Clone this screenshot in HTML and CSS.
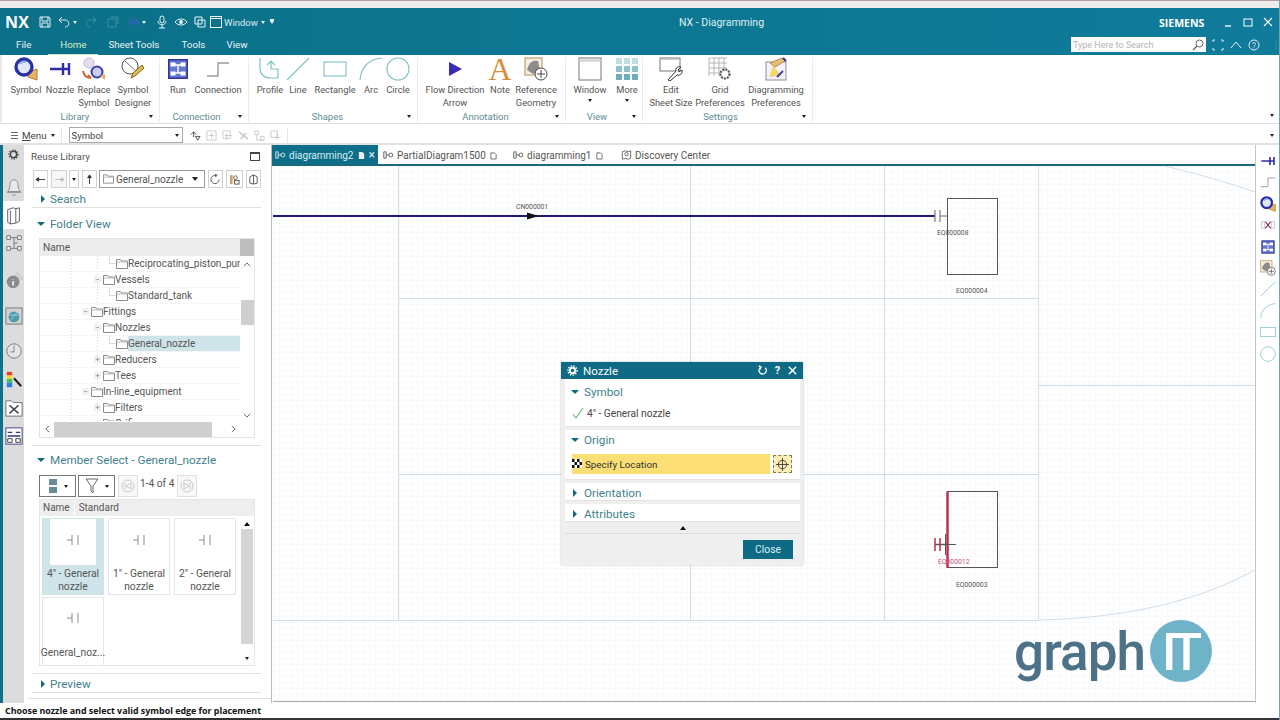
FILE: index.html
```html
<!DOCTYPE html>
<html lang="en">
<head>
<meta charset="utf-8">
<title>NX - Diagramming</title>
<link rel="stylesheet" href="styles.css">
</head>
<body>
<svg class="defs" width="0" height="0" aria-hidden="true">
  <defs>
    <symbol id="i-nozzle" viewBox="0 0 24 24"><path d="M2 12H15M15 6V18M21 6V18M15 12H21" fill="none" stroke="#2f2aa8" stroke-width="2.4"/></symbol>
    <symbol id="i-symbol" viewBox="0 0 24 24"><path d="M14 15l9-3v11l-9-3z" fill="#e9b25f" stroke="#b8802c"/><circle cx="10" cy="10" r="8" fill="#dfe9f8" stroke="#2b2fa6" stroke-width="3.4"/><path d="M6 7a5 5 0 0 1 6-2" fill="none" stroke="#7fb2e8" stroke-width="2"/></symbol>
    <symbol id="i-replace" viewBox="0 0 24 24"><circle cx="7" cy="6" r="5" fill="#e5dcef" stroke="#c5b7d6"/><circle cx="15" cy="15" r="5.5" fill="#c9d1ef" stroke="#3a3fa8" stroke-width="2"/><path d="M1 14c1 5 4 7 8 7M9 21l-3-3" fill="none" stroke="#d4682c" stroke-width="2"/><path d="M18 19l5-2v6z" fill="#e9b25f"/></symbol>
    <symbol id="i-designer" viewBox="0 0 24 24"><circle cx="9" cy="9" r="8" fill="#fff" stroke="#555"/><path d="M4 4l13 12" stroke="#777"/><path d="M10 21l2-5L21 8l2 3-9 8z" fill="#e3bd4d" stroke="#7a6420"/></symbol>
    <symbol id="i-run" viewBox="0 0 24 24"><rect x="2" y="2" width="20" height="20" fill="#2e34a0"/><rect x="3.500" y="3.500" width="17" height="17" fill="#6577c8"/><path d="M8 8H16M12 8V16M8 16H16" stroke="#fff" stroke-width="1.4"/><rect x="4.500" y="5.500" width="5" height="4" fill="#fff"/><rect x="14.500" y="5.500" width="5" height="4" fill="#fff"/><rect x="4.500" y="14.500" width="5" height="4" fill="#fff"/><rect x="14.500" y="14.500" width="5" height="4" fill="#fff"/></symbol>
    <symbol id="i-conn" viewBox="0 0 24 24"><path d="M1 19H12V6H23" fill="none" stroke="#9a9a9a" stroke-width="1.400"/></symbol>
    <symbol id="i-profile" viewBox="0 0 24 24"><path d="M2 1V11C2 17 6 21 12 21H20V12H13V5M9 8l4-4 4 4" fill="none" stroke="#7cc2c0" stroke-width="1.200"/></symbol>
    <symbol id="i-line" viewBox="0 0 24 24"><path d="M1 23L23 1" stroke="#7cc2c0" stroke-width="1.100"/></symbol>
    <symbol id="i-rect" viewBox="0 0 24 24"><rect x="1" y="5" width="22" height="14" fill="none" stroke="#7cc2c0" stroke-width="1.100"/></symbol>
    <symbol id="i-arc" viewBox="0 0 24 24"><path d="M1 23C2 10 10 2 23 1" fill="none" stroke="#7cc2c0" stroke-width="1.100"/></symbol>
    <symbol id="i-circle" viewBox="0 0 24 24"><circle cx="12" cy="12" r="11" fill="none" stroke="#7cc2c0" stroke-width="1.100"/></symbol>
    <symbol id="i-flow" viewBox="0 0 24 24"><path d="M6 5L19 12L6 19z" fill="#3a2bb8"/></symbol>
    <symbol id="i-ref" viewBox="0 0 24 24"><rect x="1" y="1" width="17" height="17" fill="#f5efe2" stroke="#c9a678" stroke-width="1.300"/><path d="M3 13C5 5 9 3 14 4L16 14 9 17z" fill="#8c8c8c"/><circle cx="17" cy="17" r="6" fill="#fff" stroke="#444"/><path d="M17 13V21M13 17H21" stroke="#444"/></symbol>
    <symbol id="i-window" viewBox="0 0 24 24"><rect x="1" y="1" width="22" height="22" fill="#fff" stroke="#777"/><path d="M1 3.500H23" stroke="#ccc" stroke-width="2"/></symbol>
    <symbol id="i-more" viewBox="0 0 24 24"><path d="M1 1h6v6H1zM9 1h6v6H9zM17 1h6v6h-6z" fill="#bfdde2"/><path d="M1 9h6v6H1zM9 9h6v6H9zM17 9h6v6h-6z" fill="#8fc2cb"/><path d="M1 17h6v6H1zM9 17h6v6H9zM17 17h6v6h-6z" fill="#70adb8"/></symbol>
    <symbol id="i-edit" viewBox="0 0 24 24"><rect x="1" y="1" width="20" height="13" fill="#fff" stroke="#777"/><path d="M1 2.500H21" stroke="#ccc"/><path d="M9 23l8-9c-1-3 2-5 5-4l-3 3 1 2 3-2c1 3-2 6-5 5l-7 6z" fill="#fff" stroke="#333"/></symbol>
    <symbol id="i-grid" viewBox="0 0 24 24"><path d="M1 1V19M6 1V19M11 1V19M16 1V19M1 1H19M1 6H19M1 11H19M1 16H19" stroke="#a5a5a5" stroke-width=".8" fill="none"/><circle cx="17" cy="17" r="4.500" fill="#fff" stroke="#555" stroke-width="2.200" stroke-dasharray="2 1"/></symbol>
    <symbol id="i-diag" viewBox="0 0 24 24"><rect x="2" y="5" width="20" height="18" fill="#f4f1fb" stroke="#8d8ea0"/><path d="M5 20L9 9l8 9z" fill="#f3d76a"/><path d="M6 6L18 1l3 3-10 6z" fill="#e4bf73" stroke="#b98e44"/><path d="M19 1l3 3" stroke="#2f2aa8" stroke-width="2"/><path d="M13 20l6-6" stroke="#3a3fa8" stroke-width="2"/></symbol>
    <symbol id="i-folder" viewBox="0 0 12 10"><path d="M.5 9.500V.5h4l1 1.500h6v7.500z" fill="#fff" stroke="#8a8a8a"/><path d="M.5 3h11" stroke="#bbb"/></symbol>
    <symbol id="i-card" viewBox="0 0 14 12"><path d="M1 6H6M6 1V11M12 1V11" fill="none" stroke="#8b8b8b"/></symbol>
  </defs>
</svg>

<div class="app">
  <div class="top-strip"></div>

  <header class="titlebar">
    <div class="title-row">
      <span class="logo-nx">NX</span>
      <div class="quick">
        <svg class="q q-save" viewBox="0 0 12 12"><path d="M1 1H10L11 2V11H1zM3 1V5H9V1M3 11V7H9V11" fill="none" stroke="#e8f3f6"/></svg>
        <svg class="q q-undo" viewBox="0 0 12 12"><path d="M1 4H7C12 4 12 11 7 11M1 4L4 1M1 4L4 7" fill="none" stroke="#dcebf0"/></svg>
        <span class="caret caret-light"></span>
        <svg class="q q-dim" viewBox="0 0 12 12"><path d="M11 4H5C0 4 0 11 5 11M11 4L8 1M11 4L8 7" fill="none" stroke="#3b90a6"/></svg>
        <svg class="q q-dim2" viewBox="0 0 12 12"><path d="M1 3H9V11H1zM4 1H11V8" fill="none" stroke="#3b90a6"/></svg>
        <svg class="q q-dim3" viewBox="0 0 12 12"><path d="M1 6H7M7 2V10M10 3V9" fill="none" stroke="#3060b8" stroke-width="2"/></svg>
        <span class="caret caret-light"></span>
        <svg class="q q-mic" viewBox="0 0 12 14"><rect x="4" y="1" width="4" height="7" rx="2" fill="none" stroke="#e8f3f6"/><path d="M2 6C2 11 10 11 10 6M6 10V13M3 13H9" fill="none" stroke="#e8f3f6"/></svg>
        <svg class="q q-eye" viewBox="0 0 14 12"><path d="M1 6C4 2 10 2 13 6C10 10 4 10 1 6z" fill="none" stroke="#e8f3f6"/><circle cx="7" cy="6" r="2" fill="#e8f3f6"/></svg>
        <svg class="q q-copy" viewBox="0 0 12 12"><path d="M1 1H8V8H1zM4 4H11V11H4z" fill="#0c7690" stroke="#e8f3f6"/></svg>
        <svg class="q q-win" viewBox="0 0 12 12"><rect x=".5" y=".5" width="11" height="11" fill="none" stroke="#e8f3f6"/><path d="M1 2.500H11" stroke="#e8f3f6"/></svg>
        <span class="q-label">Window</span>
        <span class="caret caret-light"></span>
        <span class="caret caret-light caret-bar"></span>
      </div>
      <span class="app-title">NX - Diagramming</span>
      <span class="siemens">SIEMENS</span>
      <div class="win-btns">
        <svg class="wb" viewBox="0 0 10 10"><path d="M2 9H8" stroke="#fff" stroke-width="1.300"/></svg>
        <svg class="wb" viewBox="0 0 10 10"><rect x="1" y="2" width="8" height="7" fill="none" stroke="#fff"/></svg>
        <svg class="wb" viewBox="0 0 10 10"><path d="M1 1L9 9M9 1L1 9" stroke="#fff" stroke-width="1.200"/></svg>
      </div>
    </div>
    <div class="menu-row">
      <nav class="menu-tabs">
        <span class="mt mt-file">File</span>
        <span class="mt mt-home">Home</span>
        <span class="mt mt-sheet">Sheet Tools</span>
        <span class="mt mt-tools">Tools</span>
        <span class="mt mt-view">View</span>
      </nav>
      <div class="search">
        <span class="search-text">Type Here to Search</span>
        <svg class="search-ico" viewBox="0 0 12 12"><circle cx="7.500" cy="4.500" r="3.500" fill="none" stroke="#666"/><path d="M5 7L1 11" stroke="#666" stroke-width="1.300"/></svg>
      </div>
      <div class="help-btns">
        <svg class="hb" viewBox="0 0 12 12"><path d="M1 3V1H3M9 1H11V3M1 9V11H3M9 11H11V9" fill="none" stroke="#e3f0f3"/></svg>
        <svg class="hb" viewBox="0 0 12 12"><path d="M1 9L6 3L11 9" fill="none" stroke="#e3f0f3"/></svg>
        <svg class="hb" viewBox="0 0 12 12"><circle cx="6" cy="6" r="5" fill="none" stroke="#e3f0f3"/><path d="M4.500 5C4.500 3 7.500 3 7.500 5C7.500 6 6 6 6 7.500M6 8.500V9.500" fill="none" stroke="#e3f0f3"/></svg>
        <svg class="hb hb-last" viewBox="0 0 12 12"><path d="M6 2V10" stroke="#3b90a6"/></svg>
      </div>
    </div>
  </header>

  <section class="ribbon">
    <div class="group g-library">
      <div class="tools">
        <div class="tool"><svg class="ico"><use href="#i-symbol"/></svg><span>Symbol</span></div>
        <div class="tool"><svg class="ico"><use href="#i-nozzle"/></svg><span>Nozzle</span></div>
        <div class="tool"><svg class="ico"><use href="#i-replace"/></svg><span>Replace<br>Symbol</span></div>
        <div class="tool"><svg class="ico"><use href="#i-designer"/></svg><span>Symbol<br>Designer</span></div>
      </div>
      <div class="group-foot"><span class="group-name">Library</span><span class="caret"></span></div>
    </div>
    <div class="group g-connection">
      <div class="tools">
        <div class="tool"><svg class="ico"><use href="#i-run"/></svg><span>Run</span></div>
        <div class="tool"><svg class="ico"><use href="#i-conn"/></svg><span>Connection</span></div>
      </div>
      <div class="group-foot"><span class="group-name">Connection</span><span class="caret"></span></div>
    </div>
    <div class="group g-shapes">
      <div class="tools">
        <div class="tool"><svg class="ico"><use href="#i-profile"/></svg><span>Profile</span></div>
        <div class="tool"><svg class="ico"><use href="#i-line"/></svg><span>Line</span></div>
        <div class="tool"><svg class="ico"><use href="#i-rect"/></svg><span>Rectangle</span></div>
        <div class="tool"><svg class="ico"><use href="#i-arc"/></svg><span>Arc</span></div>
        <div class="tool"><svg class="ico"><use href="#i-circle"/></svg><span>Circle</span></div>
      </div>
      <div class="group-foot"><span class="group-name">Shapes</span><span class="caret"></span></div>
    </div>
    <div class="group g-annotation">
      <div class="tools">
        <div class="tool"><svg class="ico"><use href="#i-flow"/></svg><span>Flow Direction<br>Arrow</span></div>
        <div class="tool"><span class="note-a">A</span><span>Note</span></div>
        <div class="tool"><svg class="ico"><use href="#i-ref"/></svg><span>Reference<br>Geometry</span></div>
      </div>
      <div class="group-foot"><span class="group-name">Annotation</span><span class="caret"></span></div>
    </div>
    <div class="group g-view">
      <div class="tools">
        <div class="tool"><svg class="ico"><use href="#i-window"/></svg><span>Window</span><span class="caret tool-caret"></span></div>
        <div class="tool"><svg class="ico"><use href="#i-more"/></svg><span>More</span><span class="caret tool-caret"></span></div>
      </div>
      <div class="group-foot"><span class="group-name">View</span><span class="caret"></span></div>
    </div>
    <div class="group g-settings">
      <div class="tools">
        <div class="tool"><svg class="ico"><use href="#i-edit"/></svg><span>Edit<br>Sheet Size</span></div>
        <div class="tool"><svg class="ico"><use href="#i-grid"/></svg><span>Grid<br>Preferences</span></div>
        <div class="tool"><svg class="ico"><use href="#i-diag"/></svg><span>Diagramming<br>Preferences</span></div>
      </div>
      <div class="group-foot"><span class="group-name">Settings</span><span class="caret"></span></div>
    </div>
    <div class="ribbon-end"><span class="caret"></span></div>
  </section>

  <section class="cmdbar">
    <span class="burger"></span>
    <span class="menu-label"><u>M</u>enu</span>
    <span class="caret"></span>
    <span class="cmd-sep"></span>
    <div class="combo"><span>Symbol</span><span class="caret"></span></div>
    <div class="cmd-icons">
      <svg class="ci" viewBox="0 0 12 12"><path d="M1 5L4 2L7 5M4 2V8M6 7H11L8.500 11z" fill="none" stroke="#444"/></svg>
      <svg class="ci" viewBox="0 0 12 12"><path d="M1 1H11V11H1zM6 3V9M3 6H9" fill="none" stroke="#c9c9c9"/></svg>
      <svg class="ci" viewBox="0 0 12 12"><path d="M1 1H9V9H1zM5 3V11M3 6H11" fill="none" stroke="#c9c9c9"/></svg>
      <svg class="ci" viewBox="0 0 12 12"><path d="M1 2L11 10M3 10L9 3" fill="none" stroke="#c9c9c9" stroke-width="1.600"/></svg>
      <svg class="ci" viewBox="0 0 12 12"><path d="M1 1H5V5H1zM3 5V11H11M7 7H11V11H7z" fill="none" stroke="#c9c9c9"/></svg>
      <svg class="ci" viewBox="0 0 12 12"><path d="M1 1H8V8H1zM8 4V11M5 8H11" fill="none" stroke="#c9c9c9"/></svg>
    </div>
    <span class="cmd-sep cmd-sep-b"></span>
    <span class="caret cmd-end"></span>
  </section>

  <main class="main">
    <aside class="rail">
      <div class="rail-item"><svg class="ri ri-gear" viewBox="0 0 12 12"><circle cx="6" cy="6" r="3.500" fill="none" stroke="#444" stroke-width="1.600"/><circle cx="6" cy="6" r="5" fill="none" stroke="#444" stroke-width="1.200" stroke-dasharray="1.500 1.500"/></svg></div>
      <div class="rail-item"><svg class="ri" viewBox="0 0 20 22"><path d="M3 16C6 13 5 9 6 6C7 2 13 2 14 6C15 9 14 13 17 16z" fill="#e8e8e8" stroke="#8a8a8a"/><path d="M2 17H18M8 19C9 21 11 21 12 19" fill="none" stroke="#8a8a8a"/></svg></div>
      <div class="rail-item rail-active"><svg class="ri" viewBox="0 0 20 22"><path d="M3 5L9 3L12 4V20L6 21L3 19z" fill="#fff" stroke="#555"/><path d="M6 6V21M12 4L16 3V18L12 20" fill="none" stroke="#555"/></svg></div>
      <div class="rail-item"><svg class="ri" viewBox="0 0 20 20"><path d="M2 2H6V6H2zM14 2H18V6H14zM2 14H6V18H2zM14 14H18V18H14z" fill="#fff" stroke="#666"/><path d="M6 4H10V16H6M10 10H14M14 4H10M10 16H14" fill="none" stroke="#777"/></svg></div>
      <div class="rail-item"><svg class="ri" viewBox="0 0 20 20"><circle cx="9" cy="11" r="7" fill="#8b8b8b"/><path d="M9 8V8.500M9 10V15" stroke="#fff" stroke-width="1.600"/><path d="M12 1C16 2 19 5 19 9M11 4C14 4 16 6 16 9" fill="none" stroke="#b5b5b5"/></svg></div>
      <div class="rail-item"><svg class="ri" viewBox="0 0 20 20"><rect x="1" y="1" width="18" height="18" fill="#d0d0d0" stroke="#777"/><circle cx="10" cy="11" r="6" fill="#4f9ab0"/><path d="M5 9H15M7 14L13 6" stroke="#9ed1dc"/></svg></div>
      <div class="rail-item"><svg class="ri" viewBox="0 0 20 20"><circle cx="10" cy="10" r="8" fill="#e5e5e5" stroke="#777"/><path d="M10 4V11H6" fill="none" stroke="#777"/></svg></div>
      <div class="rail-item"><svg class="ri" viewBox="0 0 20 20"><rect x="2" y="1" width="6" height="4" fill="#e5412c"/><rect x="2" y="5" width="6" height="4" fill="#f5d63a"/><rect x="2" y="9" width="6" height="4" fill="#35c45b"/><rect x="2" y="13" width="6" height="5" fill="#2d7fe0"/><path d="M10 8L18 17" stroke="#222" stroke-width="2.400"/></svg></div>
      <div class="rail-item"><svg class="ri" viewBox="0 0 20 20"><path d="M1 2H7L9 4H19V19H1z" fill="#fff" stroke="#666"/><path d="M5 7L15 16M15 7L5 16" stroke="#444" stroke-width="1.700"/></svg></div>
      <div class="rail-item"><svg class="ri" viewBox="0 0 20 20"><rect x="1" y="1" width="18" height="18" fill="#fff" stroke="#2f3a80"/><path d="M3 6H8M12 6H17M3 10H17" stroke="#2f3a80" stroke-width="1.400"/><path d="M3 13H8V17H3zM12 13H17V17H12z" fill="none" stroke="#333"/></svg></div>
    </aside>

    <aside class="panel">
      <div class="panel-title"><span>Reuse Library</span><span class="max-box"></span></div>
      <div class="lib-tools">
        <span class="tb tb-w"><svg viewBox="0 0 12 8"><path d="M1 4H11M1 4L4 2V6z" stroke="#333" fill="#333"/></svg></span>
        <span class="tb tb-w tb-dis"><svg viewBox="0 0 12 8"><path d="M1 4H10M11 4L8 2V6z" stroke="#bbb" fill="#bbb"/></svg></span>
        <span class="tb tb-n"><span class="caret"></span></span>
        <span class="tb tb-w"><svg viewBox="0 0 8 12"><path d="M4 11V2M4 1L2 4H6z" stroke="#333" fill="#333"/></svg></span>
        <span class="tb lib-combo"><svg class="fold"><use href="#i-folder"/></svg><span>General_nozzle</span><span class="caret"></span></span>
        <span class="tb tb-w"><svg viewBox="0 0 12 12"><path d="M10 6A4.500 4.500 0 1 1 6 1.500M6 0V3L8 1.500z" fill="none" stroke="#555"/></svg></span>
        <span class="tb tb-x"><svg viewBox="0 0 12 12"><rect x="1" y="1" width="3" height="10" fill="#c8a86a"/><circle cx="7" cy="4" r="2" fill="none" stroke="#555"/><rect x="6" y="7" width="5" height="4" fill="none" stroke="#555"/></svg></span>
        <span class="tb tb-w"><svg viewBox="0 0 12 12"><path d="M2 3L6 1L10 3V10L6 11L2 10zM6 1V11" fill="none" stroke="#555"/></svg></span>
      </div>

      <div class="sec-head sec-line"><span class="tri tri-r"></span><span>Search</span></div>
      <div class="sec-head sec-folder"><span class="tri tri-d"></span><span>Folder View</span></div>

      <div class="tree">
        <div class="tree-head"><span>Name</span><span class="tree-corner"></span></div>
        <div class="tree-mid">
          <div class="tree-body">
            <div class="row lv4"><span class="conn"></span><svg class="fold"><use href="#i-folder"/></svg><span class="rt">Reciprocating_piston_pump</span></div>
            <div class="row lv3"><span class="ex">−</span><svg class="fold"><use href="#i-folder"/></svg><span class="rt">Vessels</span></div>
            <div class="row lv4"><span class="conn"></span><svg class="fold"><use href="#i-folder"/></svg><span class="rt">Standard_tank</span></div>
            <div class="row lv2"><span class="ex">−</span><svg class="fold"><use href="#i-folder"/></svg><span class="rt">Fittings</span></div>
            <div class="row lv3"><span class="ex">−</span><svg class="fold"><use href="#i-folder"/></svg><span class="rt">Nozzles</span></div>
            <div class="row lv4"><span class="conn"></span><svg class="fold"><use href="#i-folder"/></svg><span class="rt rt-sel">General_nozzle</span></div>
            <div class="row lv3"><span class="ex">+</span><svg class="fold"><use href="#i-folder"/></svg><span class="rt">Reducers</span></div>
            <div class="row lv3"><span class="ex">+</span><svg class="fold"><use href="#i-folder"/></svg><span class="rt">Tees</span></div>
            <div class="row lv2"><span class="ex">−</span><svg class="fold"><use href="#i-folder"/></svg><span class="rt">In-line_equipment</span></div>
            <div class="row lv3"><span class="ex">+</span><svg class="fold"><use href="#i-folder"/></svg><span class="rt">Filters</span></div>
            <div class="row lv3"><span class="ex">+</span><svg class="fold"><use href="#i-folder"/></svg><span class="rt">Orifices</span></div>
          </div>
          <div class="vscroll">
            <svg class="sa" viewBox="0 0 10 6"><path d="M1 5L5 1L9 5" fill="none" stroke="#444"/></svg>
            <span class="vthumb"></span>
            <svg class="sa sa-end" viewBox="0 0 10 6"><path d="M1 1L5 5L9 1" fill="none" stroke="#444"/></svg>
          </div>
        </div>
        <div class="hscroll">
          <svg class="sh" viewBox="0 0 6 10"><path d="M5 1L1 5L5 9" fill="none" stroke="#444"/></svg>
          <span class="hthumb"></span>
          <svg class="sh" viewBox="0 0 6 10"><path d="M1 1L5 5L1 9" fill="none" stroke="#444"/></svg>
        </div>
      </div>

      <div class="divider div-a"></div>
      <div class="sec-head sec-member"><span class="tri tri-d"></span><span>Member Select - General_nozzle</span></div>

      <div class="member-tools">
        <span class="mb mb-a"><svg class="mb-ico" viewBox="0 0 10 16"><rect x="1" y="1" width="8" height="6" fill="#6a8a9a"/><rect x="1" y="9" width="8" height="6" fill="#6a8a9a"/></svg><span class="caret"></span></span>
        <span class="mb mb-b"><svg class="mb-ico2" viewBox="0 0 14 16"><path d="M1 1H13L8 8V15L6 13V8z" fill="none" stroke="#666"/></svg><span class="caret"></span></span>
        <span class="mb mb-dis"><svg viewBox="0 0 14 14"><circle cx="7" cy="7" r="6" fill="none" stroke="#c8c8c8"/><path d="M4 4V10M10 4L5 7L10 10z" fill="none" stroke="#c8c8c8"/></svg></span>
        <span class="page-count">1-4 of 4</span>
        <span class="mb mb-dis"><svg viewBox="0 0 14 14"><circle cx="7" cy="7" r="6" fill="none" stroke="#c8c8c8"/><path d="M10 4V10M4 4L9 7L4 10z" fill="none" stroke="#c8c8c8"/></svg></span>
      </div>

      <div class="member-table">
        <div class="mt-head"><span class="mh mh-name">Name</span><span class="mh">Standard</span></div>
        <div class="mt-body">
          <div class="cards">
            <div class="card card-sel"><div class="thumb"><svg class="ci-sym"><use href="#i-card"/></svg></div><span>4" - General<br>nozzle</span></div>
            <div class="card"><div class="thumb"><svg class="ci-sym"><use href="#i-card"/></svg></div><span>1" - General<br>nozzle</span></div>
            <div class="card"><div class="thumb"><svg class="ci-sym"><use href="#i-card"/></svg></div><span>2" - General<br>nozzle</span></div>
            <div class="card card-short"><div class="thumb thumb-short"><svg class="ci-sym"><use href="#i-card"/></svg></div><span>General_noz...</span></div>
          </div>
          <div class="mscroll">
            <span class="up-tri"></span>
            <span class="mthumb"></span>
            <span class="caret"></span>
          </div>
        </div>
      </div>

      <div class="divider div-b"></div>
      <div class="sec-head sec-line sec-preview"><span class="tri tri-r"></span><span>Preview</span></div>
      <div class="divider div-c"></div>
    </aside>

    <section class="workspace">
      <div class="tabs">
        <div class="tab tab-active"><svg class="tab-ico" viewBox="0 0 14 10"><path d="M1 1H4V9H1zM4 5H8" fill="none" stroke="#fff"/><circle cx="10" cy="5" r="2.500" fill="none" stroke="#fff"/></svg><span>diagramming2</span><svg class="tab-doc" viewBox="0 0 8 10"><path d="M1 1H5L7 3V9H1z" fill="#e5f1f4"/></svg><span class="tab-x">×</span></div>
        <div class="tab tab-b"><svg class="tab-ico" viewBox="0 0 14 10"><path d="M1 1H4V9H1zM4 5H8" fill="none" stroke="#444"/><circle cx="10" cy="5" r="2.500" fill="none" stroke="#444"/></svg><span>PartialDiagram1500</span><svg class="tab-doc" viewBox="0 0 8 10"><path d="M1 2H5L7 4V9H1z" fill="none" stroke="#666"/></svg></div>
        <div class="tab tab-c"><svg class="tab-ico" viewBox="0 0 14 10"><path d="M1 1H4V9H1zM4 5H8" fill="none" stroke="#444"/><circle cx="10" cy="5" r="2.500" fill="none" stroke="#444"/></svg><span>diagramming1</span><svg class="tab-doc" viewBox="0 0 8 10"><path d="M1 2H5L7 4V9H1z" fill="none" stroke="#666"/></svg></div>
        <div class="tab tab-d"><svg class="tab-ico" viewBox="0 0 12 12"><path d="M1 2L5 1L8 2L11 1V10L8 11L5 10L1 11z" fill="none" stroke="#555"/><circle cx="6" cy="5" r="2" fill="none" stroke="#555"/></svg><span>Discovery Center</span></div>
      </div>

      <div class="canvas">
        <svg class="sheet" viewBox="273 166 982 535">
          <g class="gridline">
            <path d="M398.500 166V620M690.500 166V565M690.500 565V620M884.500 166V620M1038.500 166V620"/>
            <path d="M398 298.500H1038M398 474.500H561M803 474.500H1038M1038 385.500H1255M273 620.500H1038"/>
            <path d="M1165 166Q1215 178 1255 192M1038 620C1130 618 1200 600 1255 570"/>
          </g>
          <path class="pipe" d="M273 216H935"/>
          <path class="arrow" d="M527 212.500L539 216L527 219.500z"/>
          <text class="tag" x="516" y="209">CN000001</text>
          <path class="noz" d="M935 210V222M940 210V222M940 216H947"/>
          <rect class="box" x="947.500" y="198.500" width="50" height="76"/>
          <text class="tag" x="937" y="235">EQ000008</text>
          <text class="tag" x="956" y="293">EQ000004</text>
          <rect class="box" x="947.500" y="491.500" width="50" height="76"/>
          <path class="hot" d="M947.500 491.500V568"/>
          <path class="hot-noz" d="M935 538V551M940 538V551M935 544.500H947"/>
          <path class="cross" d="M945.500 534V555M935 544.500H956"/>
          <text class="tag tag-red" x="938" y="564">EQ000012</text>
          <text class="tag" x="956" y="587">EQ000003</text>
          <text class="logo-graph" x="1014" y="670" textLength="132">graph</text>
          <circle class="logo-circle" cx="1181" cy="651" r="31"/>
          <text class="logo-it" x="1162" y="670" textLength="40">IT</text>
        </svg>

        <div class="dialog">
          <div class="dlg-title">
            <svg class="dlg-gear" viewBox="0 0 12 12"><circle cx="6" cy="6" r="3" fill="none" stroke="#fff" stroke-width="2"/><circle cx="6" cy="6" r="5" fill="none" stroke="#fff" stroke-width="1.500" stroke-dasharray="1.500 1.500"/></svg>
            <span class="dlg-name">Nozzle</span>
            <svg class="dlg-btn" viewBox="0 0 12 12"><path d="M9 3A4 4 0 1 1 4 2.500M2 1L4.500 2.500L3 5" fill="none" stroke="#fff" stroke-width="1.400"/></svg>
            <span class="dlg-q">?</span>
            <svg class="dlg-btn" viewBox="0 0 12 12"><path d="M2 2L10 10M10 2L2 10" stroke="#fff" stroke-width="1.600"/></svg>
          </div>
          <div class="dlg-sec sec-symbol">
            <div class="dlg-head"><span class="tri tri-d"></span><span>Symbol</span></div>
            <div class="dlg-row"><svg class="check" viewBox="0 0 12 12"><path d="M1 7L4 11L11 1" fill="none" stroke="#6fc46f" stroke-width="1.200"/></svg><span>4" - General nozzle</span></div>
          </div>
          <div class="dlg-sec sec-origin">
            <div class="dlg-head"><span class="tri tri-d"></span><span>Origin</span></div>
            <div class="origin-row">
              <div class="loc"><svg class="flag" viewBox="0 0 10 10"><path d="M0 0H10V9H0z" fill="#fff"/><path d="M0 0h2.500v3H0zM5 0h2.500v3H5zM2.500 3H5v3H2.500zM7.500 3H10v3H7.500zM0 6h2.500v3H0zM5 6h2.500v3H5z" fill="#111"/></svg><span>Specify Location</span></div>
              <div class="loc-btn"><svg viewBox="0 0 14 14"><circle cx="7" cy="7" r="4.500" fill="none" stroke="#444"/><path d="M7 0V14M0 7H14" stroke="#444"/></svg></div>
            </div>
          </div>
          <div class="dlg-sec sec-col"><div class="dlg-head dlg-head-c"><span class="tri tri-r"></span><span>Orientation</span></div></div>
          <div class="dlg-sec sec-col"><div class="dlg-head dlg-head-c"><span class="tri tri-r"></span><span>Attributes</span></div></div>
          <div class="dlg-more"><span class="up-tri"></span></div>
          <div class="dlg-foot"><span class="close-btn">Close</span></div>
        </div>
      </div>
    </section>

    <aside class="right-rail">
      <svg class="rr"><use href="#i-nozzle"/></svg>
      <svg class="rr"><use href="#i-conn"/></svg>
      <svg class="rr"><use href="#i-symbol"/></svg>
      <svg class="rr" viewBox="0 0 24 24"><path d="M8 7L16 17M16 7L8 17" stroke="#8b2a5a" stroke-width="1.600"/><path d="M2 7H7V17H2zM17 7H22V17H17z" fill="none" stroke="#888" stroke-dasharray="2 1"/></svg>
      <svg class="rr"><use href="#i-run"/></svg>
      <svg class="rr"><use href="#i-ref"/></svg>
      <svg class="rr"><use href="#i-line"/></svg>
      <svg class="rr"><use href="#i-arc"/></svg>
      <svg class="rr"><use href="#i-rect"/></svg>
      <svg class="rr"><use href="#i-circle"/></svg>
    </aside>
  </main>

  <footer class="status"><span>Choose nozzle and select valid symbol edge for placement</span></footer>
</div>
</body>
</html>
```

FILE: styles.css
```css
* { box-sizing: border-box; }
html, body { margin: 0; padding: 0; width: 1280px; height: 720px; overflow: hidden; background: #fff; }
body { font-family: "Roboto", "Open Sans", "Liberation Sans", sans-serif; font-size: 10px; color: #4a4a4a; }
.defs { position: absolute; }
.app { width: 1280px; height: 720px; display: flex; flex-direction: column; overflow: hidden; border-right: 1px solid #6fa4b2; }

.caret { display: inline-block; width: 0; height: 0; border-left: 2.5px solid transparent; border-right: 2.5px solid transparent; border-top: 3px solid #222; flex: none; }
.caret-light { border-top-color: #e8f3f6; }
.caret-bar { box-shadow: 0 -2px 0 0 #e8f3f6; margin-left: 5px; }
.up-tri { display: block; width: 0; height: 0; border-left: 3px solid transparent; border-right: 3px solid transparent; border-bottom: 4px solid #111; }
.tri { display: inline-block; width: 0; height: 0; flex: none; }
.tri-d { border-left: 4px solid transparent; border-right: 4px solid transparent; border-top: 4px solid #17687e; }
.tri-r { border-top: 4px solid transparent; border-bottom: 4px solid transparent; border-left: 4px solid #17687e; margin-left: 2px; }

.top-strip { height: 8px; background: #ececec; border-top: 1.500px solid #b89b9b; flex: none; }

.titlebar { height: 47px; flex: none; background: linear-gradient(90deg, #0b7088, #0d7690 40%, #107b9b); color: #fff; display: flex; flex-direction: column; }
.title-row { height: 26px; display: flex; align-items: center; position: relative; padding: 2px 0 0 5px; }
.logo-nx { font: 700 16px "Open Sans", sans-serif; width: 34px; letter-spacing: .3px; }
.quick { display: flex; align-items: center; }
.q { display: block; width: 12px; height: 12px; }
.q-undo { margin-left: 7px; }
.quick .caret { margin-left: 3px; }
.q-dim { margin-left: 8px; }
.q-dim2 { margin-left: 10px; }
.q-dim3 { margin-left: 8px; }
.q-mic { margin-left: 10px; height: 14px; }
.q-eye { margin-left: 6px; width: 14px; }
.q-copy { margin-left: 6px; }
.q-win { margin-left: 4px; }
.q-label { margin-left: 2px; font-size: 9.500px; color: #d8ebf0; }
.quick .caret-bar { margin-left: 5px; }
.app-title { position: absolute; left: 679px; top: 8px; font-size: 10.500px; color: #dff0f4; }
.siemens { position: absolute; left: 1159px; top: 8px; font: 700 10.500px "Open Sans", sans-serif; }
.win-btns { position: absolute; left: 1223px; top: 9px; display: flex; gap: 10px; }
.wb { width: 10px; height: 10px; display: block; }

.menu-row { height: 21px; display: flex; align-items: center; position: relative; }
.menu-tabs { display: flex; height: 100%; }
.mt { font-size: 9.800px; color: #e8f3f6; display: flex; align-items: center; height: 21px; }
.mt-file { margin-left: 16px; }
.mt-home { margin-left: 17px; width: 50px; justify-content: center; color: #d6efc4; border-bottom: 1px solid #cfe7c0; }
.mt-sheet { margin-left: 10px; }
.mt-tools { margin-left: 22px; }
.mt-view { margin-left: 21px; }
.search { position: absolute; left: 1071px; top: 3px; width: 135px; height: 15px; background: #fff; display: flex; align-items: center; justify-content: space-between; padding: 0 2px; }
.search-text { font-size: 9px; color: #b4b4b4; }
.search-ico { width: 12px; height: 12px; }
.help-btns { position: absolute; left: 1212px; top: 5px; display: flex; gap: 6px; }
.hb { width: 12px; height: 12px; display: block; }
.hb-last { margin-left: 4px; }

.ribbon { height: 69px; flex: none; display: flex; background: #fff; border-bottom: 1px solid #dedede; border-left: 2px solid #e9e9e9; }
.group { display: flex; flex-direction: column; border-right: 1px solid #ececec; height: 65px; margin-top: 2px; }
.tools { display: grid; height: 54px; }
.tool { display: flex; flex-direction: column; align-items: center; text-align: center; line-height: 13px; font-size: 9.300px; color: #555; white-space: nowrap; }
.tool .ico, .tool .note-a { width: 24px; height: 24px; margin-bottom: 2px; flex: none; display: block; }
.note-a { font: 400 32px/24px "Liberation Serif", serif; color: #d88c38; }
.tool .note-a { width: 24px; text-align: center; }
.tool-caret { margin-top: 3px; }
.group-foot { display: flex; align-items: center; height: 12px; padding-right: 6px; }
.group-name { flex: 1; text-align: center; color: #5f8c96; font-size: 9.500px; padding-right: 8px; }
.g-library { width: 158px; padding-left: 7px; }
.g-library .tools { grid-template-columns: 34px 34px 34px 44px; }
.g-connection { width: 89px; padding-left: 3px; }
.g-connection .tools { grid-template-columns: 30px 50px; }
.g-shapes { width: 169px; padding-left: 7px; }
.g-shapes .tools { grid-template-columns: 28px 28px 46px 26px 28px; }
.g-annotation { width: 148px; padding-left: 6px; }
.g-annotation .tools { grid-template-columns: 62px 28px 44px; }
.g-view { width: 77px; padding-left: 4px; }
.g-view .tools { grid-template-columns: 40px 34px; }
.g-settings { width: 170px; padding-left: 4px; }
.g-settings .tools { grid-template-columns: 48px 50px 62px; }
.ribbon-end { margin-left: auto; align-self: flex-end; padding: 0 5px 4px 0; }

.cmdbar { height: 21px; flex: none; display: flex; align-items: center; background: #fff; border-bottom: 2px solid #e2e2e2; position: relative; padding: 3px 0 0 11px; }
.burger { width: 7px; height: 7px; border-top: 1px solid #666; border-bottom: 1px solid #666; position: relative; }
.burger::after { content: ""; position: absolute; left: 0; right: 0; top: 2px; height: 1px; background: #666; }
.menu-label { margin-left: 4px; font-size: 9.800px; color: #444; }
.cmdbar > .caret { margin-left: 4px; }
.cmd-sep { width: 1px; height: 15px; background: #e6e6e6; margin-left: 6px; }
.combo { width: 114px; height: 16px; margin-left: 7px; border: 1px solid #aaa; display: flex; align-items: center; justify-content: space-between; padding: 0 3px 0 2px; font-size: 9.500px; color: #444; }
.cmd-icons { display: flex; gap: 5px; margin-left: 7px; }
.ci { width: 11px; height: 11px; display: block; }
.cmd-sep-b { margin-left: 6px; }
.cmdbar > .cmd-end { margin-left: auto; margin-right: 5px; }

.main { flex: 1; display: flex; min-height: 0; }
.rail { width: 24px; flex: none; background: #dcdcdc; border-left: 3px solid #0d7288; display: flex; flex-direction: column; }
.rail-item { height: 28px; display: flex; align-items: center; justify-content: center; }
.rail-item:nth-child(1) { height: 18px; }
.rail-item:nth-child(2) { margin-top: 10px; }
.rail-item:nth-child(5) { margin-top: 10px; }
.rail-item:nth-child(6) { margin-top: 7px; }
.rail-item:nth-child(7) { margin-top: 7px; }
.rail-item:nth-child(8) { margin-top: 1px; }
.rail-active { background: #fff; }
.ri { width: 18px; height: 20px; display: block; }
.ri-gear { width: 11px; height: 11px; }

.panel { width: 248px; flex: none; background: #fff; border-right: 1px solid #bbb; display: flex; flex-direction: column; }
.panel-title { height: 22px; display: flex; align-items: center; justify-content: space-between; padding: 0 11px 0 7px; font-size: 9.800px; color: #555; flex: none; }
.max-box { width: 10px; height: 9px; border: 1px solid #444; border-top-width: 2px; }
.lib-tools { display: flex; margin: 3px 0 0 9px; height: 18px; gap: 3px; flex: none; }
.tb { height: 18px; border: 1px solid #d0d0d0; display: flex; align-items: center; justify-content: center; flex: none; }
.tb svg { width: 11px; height: 11px; display: block; }
.tb-w { width: 15px; }
.tb-n { width: 10px; margin-left: -1px; }
.tb-x { width: 17px; }
.tb-dis { width: 16px; background: #f6f6f6; }
.lib-combo { width: 106px; margin-left: -1px; border-color: #999; justify-content: flex-start; padding: 0 6px 0 3px; font-size: 10px; color: #555; gap: 2px; }
.lib-combo .caret { margin-left: auto; border-left-width: 3.500px; border-right-width: 3.500px; border-top-width: 4px; }
.lib-combo .fold { width: 11px; height: 10px; }
.fold { width: 12px; height: 10px; display: block; flex: none; }

.sec-head { display: flex; align-items: center; gap: 5px; font-size: 11.700px; color: #3f7f8d; height: 16px; flex: none; margin-left: 13px; }
.sec-line { margin: 3px 10px 0 8px; padding-left: 7px; border-bottom: 1px solid #e0e0e0; height: 17px; }
.sec-folder { margin-top: 8px; }
.sec-member { margin-top: 6px; }
.sec-preview { margin-top: 2px; }

.tree { width: 216px; height: 200px; margin: 6px 0 0 15px; border: 1px solid #e4e4e4; display: flex; flex-direction: column; flex: none; }
.tree-head { height: 17px; background: #ececec; display: flex; justify-content: space-between; align-items: center; padding-left: 3px; font-size: 10.200px; color: #555; flex: none; }
.tree-corner { width: 14px; height: 17px; background: #bdbdbd; }
.tree-mid { flex: 1; display: flex; min-height: 0; }
.tree-body { flex: 1; min-width: 0; overflow: hidden;
  background:
    repeating-linear-gradient(180deg, #d8d8d8 0 1px, transparent 1px 3px) 31px 0 / 1px 100% no-repeat,
    repeating-linear-gradient(180deg, #d8d8d8 0 1px, transparent 1px 3px) 57px 0 / 1px 100% no-repeat; }
.row { height: 16px; display: flex; align-items: center; border-bottom: 1px dotted #ededed; font-size: 10px; color: #555; white-space: nowrap; }
.lv2 { padding-left: 42px; }
.lv3 { padding-left: 54px; }
.lv4 { padding-left: 69px; }
.conn { width: 7px; height: 9px; border-left: 1px solid #ddd; border-bottom: 1px solid #ddd; margin-top: -8px; flex: none; }
.ex { width: 7px; height: 7px; margin-right: 2px; line-height: 7px; text-align: center; font-size: 8px; color: #888; background: #f1f1f1; flex: none; overflow: hidden; }
.rt { overflow: hidden; flex: 1; height: 15px; line-height: 15px; }
.rt-sel { background: #cfe4e9; }
.vscroll { width: 14px; flex: none; display: flex; flex-direction: column; align-items: center; padding-top: 6px; background: #fff; }
.sa { width: 8px; height: 5px; display: block; flex: none; }
.vthumb { width: 13px; height: 25px; background: #cfcfcf; margin-top: 33px; flex: none; }
.sa-end { margin-top: auto; margin-bottom: 3px; }
.hscroll { height: 16px; display: flex; align-items: center; padding: 0 19px 0 5px; flex: none; }
.sh { width: 5px; height: 8px; display: block; flex: none; }
.hthumb { width: 158px; height: 15px; background: #cfcfcf; margin: 0 19px 0 4px; flex: none; }

.divider { height: 1px; background: #e0e0e0; margin: 0 10px 0 8px; flex: none; }
.div-a { margin-top: 7px; }
.div-b { margin-top: 7px; }
.div-c { margin: 5px 0 0 4px; }

.member-tools { display: flex; height: 22px; margin: 7px 0 0 15px; align-items: stretch; flex: none; }
.mb { display: flex; align-items: center; border: 1px solid #777; flex: none; justify-content: center; gap: 6px; }
.mb-a { width: 37px; }
.mb-b { width: 37px; margin-left: 2px; }
.mb-dis { width: 20px; margin-left: 3px; border-color: #e0e0e0; background: #f8f8f8; }
.mb-dis svg { width: 14px; height: 14px; display: block; }
.mb-ico { width: 10px; height: 16px; display: block; }
.mb-ico2 { width: 14px; height: 16px; display: block; }
.page-count { margin-left: 2px; font-size: 10.200px; color: #555; line-height: 18px; white-space: nowrap; width: 35px; }
.mb-dis:last-child { margin-left: 2px; }

.member-table { width: 216px; height: 167px; margin: 2px 0 0 15px; border: 1px solid #e6e6e6; display: flex; flex-direction: column; flex: none; }
.mt-head { height: 16px; background: #eee; display: flex; align-items: center; font-size: 10px; color: #555; flex: none; }
.mh { padding: 0 4px; height: 16px; line-height: 16px; }
.mh-name { padding-left: 3px; border-right: 1px solid #fff; }
.mt-body { flex: 1; display: flex; min-height: 0; }
.cards { flex: 1; display: grid; grid-template-columns: repeat(3, 62px); grid-auto-rows: min-content; column-gap: 4px; row-gap: 2px; padding: 2px 0 0 2px; }
.card { height: 77px; border: 1px solid #e6e6e6; display: flex; flex-direction: column; align-items: center; text-align: center; font-size: 10.300px; line-height: 13px; color: #555; }
.card-sel { background: #cfe4e9; border-color: #cfe4e9; }
.card-short { height: 69px; white-space: nowrap; }
.thumb { width: 46px; height: 46px; background: #fff; display: flex; align-items: center; justify-content: center; margin-bottom: 2px; flex: none; padding-bottom: 4px; }
.thumb-short { height: 48px; margin-bottom: 0; padding-bottom: 8px; }
.ci-sym { width: 14px; height: 12px; display: block; }
.mscroll { width: 14px; flex: none; display: flex; flex-direction: column; align-items: center; padding: 6px 0 5px; }
.mthumb { width: 12px; height: 115px; background: #d4d4d4; margin-top: 3px; margin-bottom: auto; }

.workspace { flex: 1; min-width: 0; display: flex; flex-direction: column; padding-bottom: 1px; }
.tabs { height: 21px; flex: none; display: flex; border-bottom: 2px solid #1b6a7c; font-size: 10px; color: #555; }
.tab { display: flex; align-items: center; height: 19px; white-space: nowrap; padding-top: 1px; }
.tab-ico { width: 11px; height: 10px; display: block; flex: none; margin-right: 3px; }
.tab-doc { width: 7px; height: 9px; display: block; margin-left: 4px; flex: none; }
.tab-active { width: 106px; background: #0e6f8a; color: #d9eef3; padding-left: 3px; }
.tab-x { margin-left: 4px; font-size: 12px; line-height: 12px; color: #e0eef2; }
.tab-b { width: 135px; padding-left: 5px; }
.tab-c { width: 108px; padding-left: 0; }
.tab-d { padding-left: 0; }

.canvas { flex: 1; min-height: 0; margin-left: 1px; position: relative; overflow: hidden; background-color: #fff;
  background-image:
    linear-gradient(#f7f9fb 1px, transparent 1px),
    linear-gradient(90deg, #f7f9fb 1px, transparent 1px);
  background-size: 6px 6px;
  border-bottom: 1px solid #a8a8a8; }
.sheet { display: block; width: 982px; height: 535px; }
.gridline path { fill: none; stroke: #d0deec; stroke-width: 1; }
.pipe { fill: none; stroke: #1e1b78; stroke-width: 2; }
.arrow { fill: #111; }
.tag { font-size: 6.800px; fill: #555; font-family: "Roboto", sans-serif; }
.tag-red { fill: #c8557c; }
.noz { fill: none; stroke: #666; stroke-width: 1; }
.box { fill: none; stroke: #555; stroke-width: 1; }
.hot { fill: none; stroke: #b8324f; stroke-width: 2.500; }
.hot-noz { fill: none; stroke: #b8324f; stroke-width: 1.500; }
.cross { fill: none; stroke: #555; stroke-width: 1; }
.logo-graph { font: 500 53px "Roboto", sans-serif; fill: #4d7186; }
.logo-circle { fill: #6fb3c9; }
.logo-it { font: 500 51px "Roboto", sans-serif; fill: #fff; }

.dialog { position: absolute; left: 288px; top: 196px; width: 242px; height: 203px; background: #efefef; box-shadow: 0 0 2px rgba(0,0,0,.25); display: flex; flex-direction: column; }
.dlg-title { height: 17px; flex: none; background: #0e6a85; color: #fff; display: flex; align-items: center; padding: 0 5px 0 6px; font-size: 11.500px; }
.dlg-gear { width: 11px; height: 11px; display: block; flex: none; }
.dlg-name { margin-left: 5px; flex: 1; }
.dlg-btn { width: 11px; height: 11px; display: block; flex: none; }
.dlg-q { width: 11px; margin: 0 4px; text-align: center; font-weight: 700; font-size: 11px; }
.dlg-sec { background: #fff; margin: 0 3px 3px 4px; flex: none; padding-left: 6px; border-bottom: 1px solid #e2e2e2; }
.sec-symbol { height: 48px; }
.sec-origin { height: 50px; }
.sec-col { height: 18px; }
.dlg-head { display: flex; align-items: center; gap: 5px; height: 26px; font-size: 11.700px; color: #3f7f8d; }
.dlg-head-c { height: 18px; padding-top: 2px; }
.dlg-head-c .tri-r { margin-right: 2px; }
.sec-origin .dlg-head { height: 20px; }
.dlg-row { display: flex; align-items: center; gap: 3px; padding-left: 1px; font-size: 10.200px; color: #444; height: 16px; }
.check { width: 12px; height: 12px; display: block; flex: none; }
.origin-row { display: flex; margin: 4px 0 0 1px; }
.loc { width: 198px; height: 20px; background: #fbdf74; display: flex; align-items: center; gap: 3px; font-size: 9.800px; color: #333; }
.flag { width: 10px; height: 10px; display: block; flex: none; }
.loc-btn { width: 19px; height: 18px; margin: 1px 0 0 3px; background: #fdeeb5; border: 1px dashed #887a50; display: flex; align-items: center; justify-content: center; }
.loc-btn svg { width: 13px; height: 13px; display: block; }
.dlg-more { height: 11px; margin: -2px 3px 0 4px; display: flex; align-items: center; justify-content: center; border-bottom: 1px solid #dcdcdc; flex: none; }
.dlg-foot { flex: 1; display: flex; justify-content: flex-end; padding: 6px 10px 0 0; }
.close-btn { width: 50px; height: 19px; background: #0e6a85; color: #d9eef3; text-align: center; line-height: 19px; font-size: 10.300px; }

.right-rail { width: 24px; flex: none; background: #fff; display: flex; flex-direction: column; align-items: center; padding: 8px 0 0; gap: 5.400px; border-left: 1px solid #c4c4c4; }
.rr { width: 16px; height: 16px; display: block; flex: none; }

.status { height: 17px; flex: none; background: #fff; border-bottom: 2px solid #333; padding-left: 5px; font: 700 8.900px/15px "Open Sans", sans-serif; color: #111; white-space: nowrap; }
```
